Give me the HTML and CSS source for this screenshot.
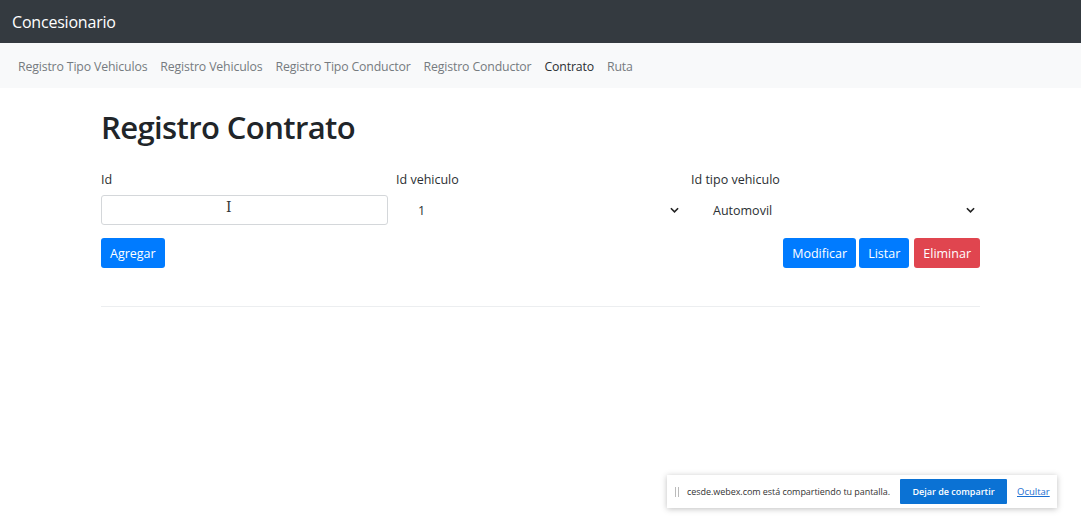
FILE: index.html
```html
<!DOCTYPE html>
<html lang="es">
<head>
<meta charset="utf-8">
<title>Concesionario</title>
<link rel="stylesheet" href="styles.css">
</head>
<body>
<header class="topbar">
  <span class="brand">Concesionario</span>
</header>
<nav class="subnav">
  <a class="nav-link">Registro Tipo Vehiculos</a>
  <a class="nav-link">Registro Vehiculos</a>
  <a class="nav-link">Registro Tipo Conductor</a>
  <a class="nav-link">Registro Conductor</a>
  <a class="nav-link active">Contrato</a>
  <a class="nav-link">Ruta</a>
</nav>
<main class="container">
  <h1 class="title">Registro Contrato</h1>
  <div class="form-row">
    <div class="field">
      <label class="label">Id</label>
      <div class="input"><span class="caret-ibeam">I</span></div>
    </div>
    <div class="field">
      <label class="label">Id vehiculo</label>
      <div class="select"><span>1</span><svg class="chev" viewBox="0 0 10 6" width="9" height="6"><path d="M1 1l4 4 4-4" fill="none" stroke="#222" stroke-width="1.8"/></svg></div>
    </div>
    <div class="field">
      <label class="label">Id tipo vehiculo</label>
      <div class="select"><span>Automovil</span><svg class="chev" viewBox="0 0 10 6" width="9" height="6"><path d="M1 1l4 4 4-4" fill="none" stroke="#222" stroke-width="1.8"/></svg></div>
    </div>
  </div>
  <div class="actions">
    <button class="btn btn-blue">Agregar</button>
    <div class="actions-right">
      <button class="btn btn-blue">Modificar</button>
      <button class="btn btn-blue">Listar</button>
      <button class="btn btn-red">Eliminar</button>
    </div>
  </div>
  <hr class="divider">
</main>
<div class="share-bar">
  <span class="grip"></span>
  <span class="share-text">cesde.webex.com está compartiendo tu pantalla.</span>
  <button class="share-btn">Dejar de compartir</button>
  <a class="share-link">Ocultar</a>
</div>
</body>
</html>
```
FILE: styles.css
```css
* { box-sizing: border-box; }
html, body { margin: 0; padding: 0; }
body {
  font-family: "Open Sans", "Noto Sans", sans-serif;
  color: #212529;
  background: #fff;
  width: 1081px;
  height: 518px;
  overflow: hidden;
  position: relative;
}
.topbar {
  height: 43px;
  background: #343a40;
  display: flex;
  align-items: center;
  padding-left: 12px;
}
.brand {
  color: #fff;
  font-size: 16px;
  letter-spacing: -0.2px;
}
.subnav {
  height: 45px;
  background: #f8f9fa;
  display: flex;
  align-items: center;
  padding-left: 18px;
  padding-top: 2px;
  gap: 13px;
  font-size: 12.3px;
}
.nav-link {
  color: #767b80;
  letter-spacing: -0.15px;
}
.nav-link.active { color: #2b2f33; }
.container {
  width: 879px;
  margin: 0 0 0 101px;
}
.title {
  margin: 19px 0 0;
  font-size: 31px;
  font-weight: 600;
  line-height: 40px;
  letter-spacing: -0.6px;
  color: #212529;
}
.form-row {
  display: grid;
  grid-template-columns: 287px 287px 288px;
  column-gap: 8px;
  margin-top: 24px;
}
.label {
  display: block;
  font-size: 12.5px;
  line-height: 18px;
  margin-bottom: 6px;
  color: #2b2f33;
}
.input {
  height: 30px;
  border: 1px solid #d4d7da;
  border-radius: 3px;
  position: relative;
}
.caret-ibeam {
  position: absolute;
  left: 124px;
  top: 3px;
  font-family: "DejaVu Serif", serif;
  font-size: 14px;
  color: #333;
}
.select {
  height: 30px;
  display: flex;
  align-items: center;
  justify-content: space-between;
  padding: 0 4px 0 22px;
  font-size: 12.5px;
  color: #2b2f33;
}
.actions {
  display: flex;
  justify-content: space-between;
  margin-top: 13px;
}
.actions-right {
  display: flex;
  gap: 3px;
}
.actions-right .btn-red { margin-left: 2px; }
.btn {
  height: 30px;
  border: none;
  border-radius: 3px;
  color: #fff;
  font-family: "Open Sans", "Noto Sans", sans-serif;
  font-size: 12.5px;
  padding: 0 9px;
}
.btn-blue { background: #007bff; }
.btn-red { background: #e0454f; }
.divider {
  margin: 38px 0 0;
  border: none;
  border-top: 1px solid #eceef0;
}
.share-bar {
  position: absolute;
  left: 667px;
  top: 475px;
  width: 390px;
  height: 33px;
  background: #fff;
  box-shadow: 0 1px 6px rgba(0,0,0,0.25);
  display: flex;
  align-items: center;
  padding-left: 8px;
  font-size: 9px;
}
.grip {
  width: 4px;
  height: 10px;
  border-left: 1px solid #bbb;
  border-right: 1px solid #bbb;
  margin-right: 8px;
}
.share-text { color: #333; letter-spacing: -0.05px; }
.share-btn {
  margin-left: 10px;
  height: 25px;
  width: 107px;
  border: none;
  background: #0b72d4;
  color: #fff;
  font-family: "Open Sans", sans-serif;
  font-weight: 600;
  font-size: 9px;
  border-radius: 1px;
}
.share-link {
  margin-left: 10px;
  color: #1a6ed1;
  text-decoration: underline;
  font-size: 9.5px;
}
```
